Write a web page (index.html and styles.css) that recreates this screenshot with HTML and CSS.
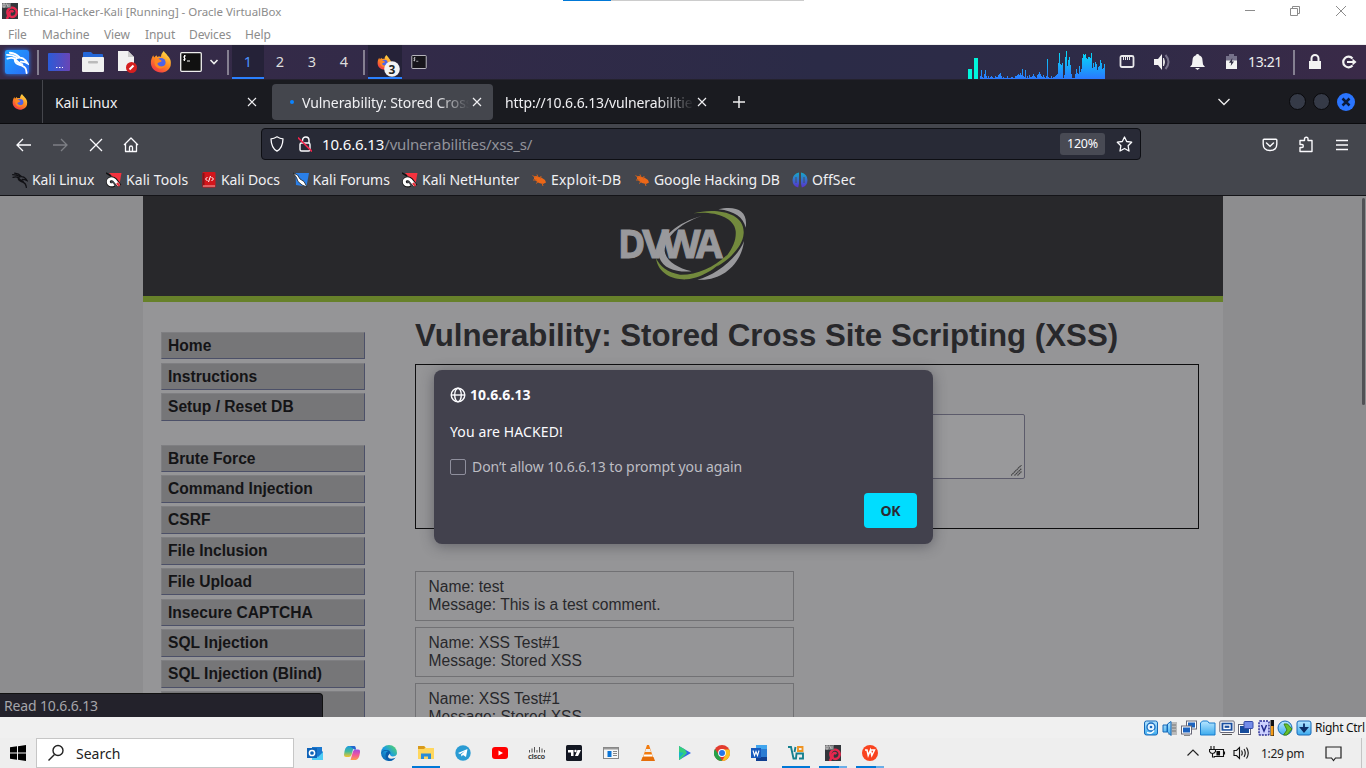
FILE: index.html
```html
<!DOCTYPE html>
<html lang="en">
<head>
<meta charset="utf-8">
<title>Ethical-Hacker-Kali [Running] - Oracle VirtualBox</title>
<link rel="stylesheet" href="styles.css">
</head>
<body>
<svg class="defs" width="0" height="0">
  <defs>
    <linearGradient id="gd" x1="0" y1="0" x2="1" y2="0"><stop offset="0" stop-color="#2b5bd8"/><stop offset="1" stop-color="#6a45b5"/></linearGradient>
    <linearGradient id="gf" x1="0.8" y1="0" x2="0.2" y2="1"><stop offset="0" stop-color="#ffe14a"/><stop offset=".5" stop-color="#ff8a20"/><stop offset="1" stop-color="#f0304a"/></linearGradient>
    <linearGradient id="gg" gradientUnits="userSpaceOnUse" x1="0" y1="0" x2="0" y2="30"><stop offset="0" stop-color="#00e8f5"/><stop offset="1" stop-color="#2a78ff"/></linearGradient>
    <linearGradient id="go" x1="0" y1="0" x2="0" y2="1"><stop offset="0" stop-color="#14a9c8"/><stop offset="1" stop-color="#5a2fd0"/></linearGradient>
    <linearGradient id="ge" x1="0" y1="1" x2="1" y2="0"><stop offset="0" stop-color="#0c59a4"/><stop offset=".5" stop-color="#1b9de0"/><stop offset="1" stop-color="#5ddc5a"/></linearGradient>
    <linearGradient id="gb" x1="0" y1="0" x2="0" y2="1"><stop offset="0" stop-color="#b8e6ff"/><stop offset="1" stop-color="#3cabee"/></linearGradient>
    <linearGradient id="gc1" x1="0" y1="0" x2="0" y2="1"><stop offset="0" stop-color="#1b9ae0"/><stop offset=".5" stop-color="#44bb99"/><stop offset="1" stop-color="#f7c52a"/></linearGradient>
    <linearGradient id="gc2" x1="0" y1="0" x2="0" y2="1"><stop offset="0" stop-color="#a14be0"/><stop offset=".5" stop-color="#f0559c"/><stop offset="1" stop-color="#ff9a4a"/></linearGradient>
    <symbol id="dragon" viewBox="0 0 24 24">
      <path d="M1 4c4 0 7 .5 10 2.500M1.500 8c3-1.200 6-1 8 .500M4 1.800c5 .5 8 2.500 10 4.700M9 8c0 6 4 6 8 7.500s4 4 4.500 7.500M10 9c2 3 5 4 7 5M11 7.500c4-1.500 7-.5 9.500 2.500l2 3-3-1.500-4-.500" fill="none" stroke="currentColor" stroke-width="1.900" stroke-linecap="round"/>
    </symbol>
    <symbol id="fox" viewBox="0 0 24 24">
      <path d="M15 0c1 2 3 3 4 5 3 3 4.500 6 3.500 11-1 4-5 7.500-10.500 7.500S1.500 19.500 1 14C.7 10 2 7 3.500 4.500L4.500 7 7 4.500l1 2c1-.5 3-.5 4 0C12 4 13 2 15 0z" fill="url(#gf)"/>
      <circle cx="12" cy="12.500" r="5" fill="#4d63e8"/>
      <path d="M5 9c2-1 4-1 6 .5l2 1.500c-1 1.500-4 1-5 3 1 3 6 4 9 1-2 6-11 5-12-1.500z" fill="#ff8722"/>
    </symbol>
    <symbol id="term" viewBox="0 0 22 20">
      <rect x=".7" y=".7" width="20.600" height="18.600" rx="1" fill="#111" stroke="#eee" stroke-width="1.300"/>
      <path d="M6 4c-2-.7-3 1-1.500 2s.8 2.500-1.500 1.700M4.500 3v6M7 9h3" fill="none" stroke="#fff"/>
    </symbol>
    <symbol id="tool" viewBox="0 0 16 16">
      <path d="M3 1h12.500L13.500 12z" fill="#f5323e"/><path d="M0 1l5 3" stroke="#111" stroke-width="1.500"/>
      <path d="M13.500 14L9 8C6.500 5.500 2.500 7 2.500 10c0 3 3.500 4 5.500 2.500" fill="none" stroke="#111" stroke-width="4.500"/>
      <path d="M13 13.500L8.500 8C6 5.500 2.300 7 2.300 9.800c0 2.800 3.200 3.800 5.400 2.400" fill="none" stroke="#fff" stroke-width="3"/>
      <path d="M11 11l2.500 3" stroke="#e6323e" stroke-width="2.500"/>
    </symbol>
    <symbol id="bug" viewBox="0 0 16 16">
      <path d="M3 4.500l2-.5 3 1 3 1 3 2 1 2.500-3 1.500-4-1-3-2-2-2.500z" fill="#ec6718"/>
      <path d="M1.500 3.500l3 2M6 2.500l1 3M10 4l-.5 3M2 8h4M5 11.500l2-1.500M12 14l-1-3" fill="none" stroke="#d0601c"/>
    </symbol>
    <symbol id="x" viewBox="0 0 12 12"><path d="M2 2l8 8M10 2l-8 8" fill="none" stroke="currentColor" stroke-width="1.200"/></symbol>
    <symbol id="spiral" viewBox="0 0 16 16">
      <rect width="16" height="16" fill="#33363b"/><path d="M4.500 16Q7 14 5.500 10.500A4.700 4.700 0 1 1 10 14C7.500 14 7 11 8 9q1.500-2 3.500 0" fill="none" stroke="#e5274e" stroke-width="2.400"/><path d="M0 0h9v5H0z" fill="#6f6f72"/><path d="M1 1h2v3H1zM4 1h1l1 3M7 1v3" stroke="#ddd" stroke-width=".7" fill="none"/>
    </symbol>
  </defs>
</svg>

<header class="titlebar">
  <svg class="app" width="16" height="16"><use href="#spiral"/></svg>
  <span class="title">Ethical-Hacker-Kali [Running] - Oracle VirtualBox</span>
  <i class="minibar"></i>
  <svg class="winctl" width="104" height="12" viewBox="0 0 104 12" fill="none" stroke="#8c8c8c"><path d="M0 5.500h10M45.500 3.500h7v7h-7zM47.500 3.500v-2h7v7h-2M91 1l10 10M101 1L91 11"/></svg>
</header>
<nav class="menubar"><span class="m1">File</span><span class="m2">Machine</span><span class="m3">View</span><span class="m4">Input</span><span class="m5">Devices</span><span>Help</span></nav>

<div class="panel">
  <span class="cell c34"><span class="kali"><svg width="23" height="23" color="#fff"><use href="#dragon"/></svg></span></span>
  <i class="sep"></i>
  <span class="cell c34"><svg width="22" height="18"><rect width="22" height="18" rx="1" fill="url(#gd)"/><path d="M8 14.500h1.500M11 14.500h1.500M14 14.500h1" stroke="#fff"/></svg></span>
  <span class="cell c34"><svg width="22" height="20"><path d="M1 1q0-1 1-1h7l2 2h9q1 0 1 1v6H1z" fill="#2467d8"/><rect y="5" width="22" height="15" rx="1" fill="#f0f0f0"/><rect x="6" y="9" width="10" height="2.500" rx="1" fill="#bbb"/></svg></span>
  <span class="cell c34"><svg width="20" height="22"><path d="M1 0h10l6 6v14H1z" fill="#f1f1f1"/><path d="M11 0l6 6h-6z" fill="#ccc"/><circle cx="14.500" cy="16.500" r="5.500" fill="#d51f1f"/><path d="M12.500 18.500l4-4" stroke="#fff" stroke-width="2"/></svg></span>
  <span class="cell c34"><svg width="22" height="22"><use href="#fox"/></svg></span>
  <span class="cell c26"><svg width="22" height="20"><use href="#term"/></svg></span>
  <span class="cell c20"><svg width="10" height="8" fill="none" stroke="#eee" stroke-width="1.600"><path d="M1.500 2L5 5.500 8.500 2"/></svg></span>
  <i class="sep"></i>
  <span class="ws on">1</span><span class="ws">2</span><span class="ws">3</span><span class="ws">4</span>
  <i class="sep"></i>
  <span class="cell c34 task"><svg width="24" height="24"><use href="#fox" x="1" y="2" width="15" height="15"/><circle cx="16" cy="16" r="7.800" fill="#f2f2f2"/><text x="16" y="20.500" class="count">3</text></svg></span>
  <span class="cell c34"><svg width="16" height="14" opacity=".8"><use href="#term"/></svg></span>
  <span class="tray">
    <svg width="140" height="30"><path d="M0 20h4v10H0zM6 9h4v21H6z" fill="#00f5dc"/><path fill="url(#gg)" d="M12 30V27h1V21h1V28h1V29h1V25h1V21h1V27h1V29h1V27h1V29h1V28h1V27h1V28h1V29h2V27h1V28h2V26h1V25h1V24h1V27h1V29h1V28h1V29h3V27h1V29h3V28h2V29h2V27h2V26h1V25h1V26h1V24h1V26h1V20h1V27h1V28h1V21h1V29h1V27h1V29h1V26h1V28h2V27h1V25h1V27h1V28h1V29h1V26h1V25h1V23h1V25h1V27h1V28h1V26h1V28h1V29h1V27h1V10h1V28h1V29h2V27h1V29h1V28h2V27h1V26h1V25h1V14h1V4h1V15h1V16h1V14h1V29h1V26h1V8h1V2h1V17h1V11h1V8h1V16h1V25h1V29h3V25h1V20h1V24h1V25h1V17h1V23h1V20h1V9h1V5h1V6h1V5h1V9h1V10h1V8h2V9h1V4h1V19h1V14h1V18h1V13h1V15h1V21h1V18h1V17h1V11h1V14h1V20h1V19h1V15h1V30z"/></svg>
    <span class="cell c37"><svg width="16" height="14" fill="none" stroke="#e8e8ea"><path d="M3 1h10q1.500 0 1.500 1.500v8q0 1.500-1.500 1.500H3q-1.500 0-1.500-1.500v-8Q1.500 1 3 1z" stroke-width="1.800"/><path d="M4.500 2v3M6.500 2v3M8.500 2v3M10.500 2v3"/></svg></span>
    <span class="cell c34"><svg width="18" height="18" fill="none"><path d="M1 6h4l4-5v16l-4-5H1z" fill="#f3f3f3"/><path d="M10.500 5q2 4 0 8z" fill="#ddd" stroke="#ddd"/><path d="M12.500 2q6 7 0 14" stroke="#77728a" stroke-width="2"/></svg></span>
    <span class="cell c36"><svg width="15" height="16" fill="#f3f3f3"><path d="M7.500 0q1.500 0 1.500 1.300 3.500 1 3.500 5.200l.5 4L15 13H0l2-2.500.5-4Q2.500 2.300 6 1.300 6 0 7.500 0zM5 14h5l-2.500 2z"/></svg></span>
    <span class="cell c32"><svg width="11" height="16"><path d="M0 2h3V0h5v2h3v5H0z" fill="#76728a"/><path d="M0 6.500h11V15H0z" fill="#f3f3f3"/><path d="M6.300 4L3 8.800h2.200L4.700 12 8 7.500H6z" fill="#302c42"/></svg></span>
    <span class="clock">13:21</span>
    <i class="sep s2"></i>
    <span class="cell c34"><svg width="14" height="16"><path d="M1 7h12v8H1z" fill="#f3f3f3"/><path d="M3.500 8V4.500a3.500 3.500 0 0 1 7 0V8" fill="none" stroke="#f3f3f3" stroke-width="2"/></svg></span>
    <span class="cell c34"><svg width="16" height="14" fill="none" stroke="#f3f3f3" stroke-width="2.200"><path d="M11.500 3.500a5.300 5.300 0 1 0 0 7M6 7h7"/><path d="M11.500 3.500L15.500 7l-4 3.500z" fill="#f3f3f3" stroke="none"/></svg></span>
  </span>
</div>

<div class="tabs">
  <span class="cell pin"><svg width="16" height="16"><use href="#fox"/></svg></span>
  <span class="tab t1"><span class="label">Kali Linux</span><svg width="12" height="12"><use href="#x"/></svg></span>
  <span class="tab t2"><i class="dot"></i><span class="label fade">Vulnerability: Stored Cross</span><svg width="12" height="12"><use href="#x"/></svg></span>
  <span class="tab t3"><span class="label fade">http://10.6.6.13/vulnerabilitie</span><svg width="12" height="12"><use href="#x"/></svg></span>
  <svg class="plus" width="12" height="12" stroke="#eee" stroke-width="1.500"><path d="M6 0v12M0 6h12"/></svg>
  <svg class="all" width="12" height="8" fill="none" stroke="#eee" stroke-width="1.300"><path d="M.5 1L6 6.500 11.500 1"/></svg>
  <span class="rounds"><i></i><i></i><i class="shut"><svg width="12" height="12" viewBox="0 0 12 12"><path d="M2.500 2.500l7 7M9.500 2.500l-7 7" stroke="#0a1a3a" stroke-width="2.500"/></svg></i></span>
</div>

<div class="navbar">
  <span class="cell c36"><svg width="16" height="14" fill="none" stroke="#fbfbfe" stroke-width="1.300"><path d="M15 7H1.500M7 1L1 7l6 6"/></svg></span>
  <span class="cell c36"><svg width="16" height="14" fill="none" stroke="#7d7f85" stroke-width="1.300"><path d="M1 7h13.500M9 1l6 6-6 6"/></svg></span>
  <span class="cell c36"><svg width="14" height="14" stroke="#fbfbfe" stroke-width="1.300"><path d="M1 1l12 12M13 1L1 13"/></svg></span>
  <span class="cell c36 home"><svg width="16" height="16" fill="none" stroke="#fbfbfe" stroke-width="1.300" stroke-linejoin="round"><path d="M1 8l7-7 7 7M2.500 7v7.500h11V7M6.500 14.500v-4q0-1.500 1.500-1.500t1.500 1.500v4"/></svg></span>
  <div class="url">
    <span class="cell c30"><svg width="16" height="16" fill="none" stroke="#fbfbfe" stroke-width="1.300"><path d="M8 .8q3 2 6 2-.3 9.500-6 12.400Q2.300 12.300 2 2.800q3 0 6-2z" stroke-linejoin="round"/></svg></span>
    <span class="cell c26"><svg width="14" height="16" fill="none" stroke="#fbfbfe" stroke-width="1.400"><rect x="2" y="7" width="10" height="8" rx="1.500"/><path d="M4.500 6V4Q5 .8 8 1t3 3v3"/><path d="M0 1.500l14 14" stroke="#f0254c" stroke-width="1.600"/></svg></span>
    <span class="addr"><b>10.6.6.13</b>/vulnerabilities/xss_s/</span>
    <span class="zoom">120%</span>
    <span class="cell c34s"><svg width="17" height="16" fill="none" stroke="#fbfbfe" stroke-width="1.300" stroke-linejoin="round"><path d="M8.500 1l2.200 4.500 5 .7-3.600 3.500.9 5.300-4.500-2.500L4 15l.9-5.300L1.300 6.200l5-.7z"/></svg></span>
  </div>
  <span class="navright">
    <span class="cell c36"><svg width="16" height="14" fill="none" stroke="#fbfbfe" stroke-width="1.400" stroke-linecap="round"><path d="M2 1.300h12q.8 0 .8.800V6q0 6.500-6.800 6.500T1.200 6V2.100q0-.8.8-.8zM4.500 5L8 8.300 11.500 5"/></svg></span>
    <span class="cell c36"><svg width="16" height="17" fill="none" stroke="#fbfbfe" stroke-width="1.400" stroke-linejoin="round"><path d="M2 4.500h4.500V3q0-1.800 1.800-1.800T10 3v1.500h4V15.500H2V11.500h2q1.300 0 1.300-1.500T4 8.500H2z"/></svg></span>
    <span class="cell c36"><svg width="12" height="12" stroke="#fbfbfe" stroke-width="1.300"><path d="M0 1.500h12M0 6h12M0 10.500h12"/></svg></span>
  </span>
</div>

<div class="bookmarks">
  <span class="b1"><svg width="16" height="16" color="#101014"><use href="#dragon"/></svg>Kali Linux</span>
  <span class="b2"><svg width="16" height="16"><use href="#tool"/></svg>Kali Tools</span>
  <span class="b3"><svg width="16" height="16"><rect x="1.500" y="0" width="13" height="15.500" rx="1" fill="#d3151b"/><path d="M1.500 1h2v13h-2z" fill="#8a1318"/><path d="M2 14h12" stroke="#eaa"/><path d="M6.500 5L4.500 7l2 2M10.500 5l2 2-2 2M9.500 4l-2 6" stroke="#fff" fill="none"/></svg>Kali Docs</span>
  <span class="b4"><svg width="16" height="16"><path d="M2.500 1H16l-2.500 13.500L3 13z" fill="#2a7fe8"/><path d="M0 1l4.500 2L7 7l4 2.500 3 5.500-5-2-4-3.500-1.500-4z" fill="#fff" stroke="#222" stroke-width=".8"/></svg>Kali Forums</span>
  <span class="b5"><svg width="16" height="16"><use href="#tool"/></svg>Kali NetHunter</span>
  <span class="b6"><svg width="16" height="16"><use href="#bug"/></svg>Exploit-DB</span>
  <span class="b7"><svg width="16" height="16"><use href="#bug"/></svg>Google Hacking DB</span>
  <span class="b8"><svg width="16" height="16" fill="url(#go)"><path d="M7 .5v11L6.200 15.500Q.5 14 .5 8T7 .5zM9 .5v11l.8 4Q15.500 14 15.500 8T9 .5z"/><path d="M4 5v6M12 5v6" stroke="#44464d" stroke-width=".8"/></svg>OffSec</span>
</div>

<main class="viewport">
  <div class="container">
    <div class="header">
      <svg width="190" height="100" viewBox="0 0 570 300">
        <path d="M335 60C260 80 198 130 208 185 220 218 260 230 305 226 260 215 228 195 224 165 225 125 265 85 335 60zM385 40C440 28 475 45 467 95 460 65 435 45 385 40zM462 135C455 200 400 257 322 251 375 238 440 190 462 135z" fill="#99999c"/>
        <path d="M310 52C370 35 465 45 461 112 459 150 420 190 380 212 420 175 440 140 437 105 432 62 370 45 310 52zM198 187C205 235 250 252 290 250 340 245 390 210 412 176 370 215 320 237 270 236 230 230 210 210 198 187z" fill="#738a3d"/>
        <g class="dvwa"><text x="84" y="185" textLength="82" lengthAdjust="spacingAndGlyphs">D</text><text x="157" y="185" textLength="80" lengthAdjust="spacingAndGlyphs">V</text><text x="216" y="185" textLength="116" lengthAdjust="spacingAndGlyphs">W</text><text x="318" y="185" textLength="80" lengthAdjust="spacingAndGlyphs">A</text></g>
      </svg>
    </div>
    <div class="columns">
      <div class="side">
        <ul><li>Home</li><li>Instructions</li><li>Setup / Reset DB</li></ul>
        <ul><li>Brute Force</li><li>Command Injection</li><li>CSRF</li><li>File Inclusion</li><li>File Upload</li><li>Insecure CAPTCHA</li><li>SQL Injection</li><li>SQL Injection (Blind)</li><li>&nbsp;</li></ul>
      </div>
      <div class="content">
        <h1>Vulnerability: Stored Cross Site Scripting (XSS)</h1>
        <div class="formbox"><div class="area"><svg width="11" height="11" stroke="#444446" stroke-width="1.200" stroke-dasharray="1.600 .4"><path d="M0 10.500L10.500 0M3.500 10.500l7-7M6.500 10.500l4-4"/></svg></div></div>
        <div class="comment">Name: test<br>Message: This is a test comment.</div>
        <div class="comment">Name: XSS Test#1<br>Message: Stored XSS</div>
        <div class="comment">Name: XSS Test#1<br>Message: Stored XSS</div>
      </div>
    </div>
  </div>
  <i class="scroll"></i>
  <div class="dialog">
    <div class="origin"><svg width="16" height="16" fill="none" stroke="#fbfbfe" stroke-width="1.400"><circle cx="8" cy="8" r="6.800"/><ellipse cx="8" cy="8" rx="3.300" ry="6.800"/><path d="M1 8h14"/></svg><span>10.6.6.13</span></div>
    <div class="msg">You are HACKED!</div>
    <div class="check"><i></i><span>Don’t allow 10.6.6.13 to prompt you again</span></div>
    <div class="buttons"><span class="ok">OK</span></div>
  </div>
  <div class="status"><span>Read 10.6.6.13</span></div>
</main>

<div class="vmstatus">
  <span class="vmicons">
    <svg width="16" height="16"><rect x="1.500" y="1" width="13" height="14" rx="2" fill="url(#gb)" stroke="#1668b8"/><circle cx="8" cy="7" r="4" fill="#e8f6ff" stroke="#186abf" stroke-width="1.300"/><circle cx="8" cy="7" r="1.300" fill="#186abf"/><path d="M4 12.500q5 2 7-2" stroke="#fff" stroke-width="1.500" fill="none"/></svg>
    <svg width="16" height="16"><path d="M8 2h7v13H6z" fill="#bbb"/><path d="M1 5h4v7H1zM5.500 4L9 1.500v14L5.500 12z" fill="url(#gb)" stroke="#1668b8"/><path d="M10 5h4M10 8h4M10 11h4" stroke="#777"/></svg>
    <svg width="16" height="16"><rect x="5.500" y="1" width="10" height="8" fill="#fff" stroke="#667"/><rect x="7" y="2.500" width="7" height="5" fill="#1b62bf"/><rect x=".5" y="6" width="10" height="8" fill="#fff" stroke="#667"/><rect x="2" y="7.500" width="7" height="5" fill="#1b62bf"/><path d="M3 15.500h6" stroke="#888"/></svg>
    <svg width="16" height="16"><path d="M.5 15V3l2-2h5l1.500 2h6v12z" fill="url(#gb)" stroke="#1b7ccc"/></svg>
    <svg width="16" height="16"><rect x=".8" y="1" width="14.400" height="11.500" rx="1" fill="#fff" stroke="#667"/><rect x="2.500" y="2.700" width="11" height="8" fill="#1b4f9f"/><rect x="5" y="5" width="6" height="3.500" fill="#1b4f9f" stroke="#fff" stroke-width="1.300"/><path d="M3 14.500h10" stroke="#555"/></svg>
    <svg width="16" height="16"><rect x=".5" y="4.500" width="12" height="10" fill="#fff" stroke="#667"/><rect x="2" y="6" width="9" height="7" fill="#164c9c"/><rect x="6" y="1.500" width="9" height="7" rx="1" fill="#738ce8" stroke="#344aa8"/></svg>
    <svg width="16" height="16"><rect x="1" y="1" width="10" height="14" rx="1" fill="#cdd2ff" stroke="#2d3196" stroke-width="1.500" stroke-dasharray="2 1"/><path d="M3.500 5L6 11l2.500-6" fill="none" stroke="#222a8c" stroke-width="1.500"/><path d="M12.500 0H16v16h-3.500z" fill="#111"/><path d="M13 6h2.500v9.500H13z" fill="#f59b16"/></svg>
    <svg width="16" height="16"><circle cx="8" cy="8" r="7" fill="url(#gb)" stroke="#1668b8"/><path d="M7 4h3.500l4.500 5-5 6H6.500l3.500-5z" fill="#67c12d" stroke="#3c8519"/></svg>
    <svg width="16" height="16"><rect x="1" y="1" width="14" height="14" rx="2" fill="url(#gb)" stroke="#1668b8"/><path d="M8 3.500v5M5 8l3 3.500L11 8z" fill="#0d2e66" stroke="#0d2e66" stroke-width="1.800"/></svg>
  </span>
  <span class="host">Right Ctrl</span>
</div>

<footer class="taskbar">
  <span class="cell c36"><svg width="16" height="16"><path d="M0 2.300L7 1.300V7.500H0zM8 1.200L16 0v7.500H8zM0 8.500h7v6.200l-7-1zM8 8.500h8V16l-8-1.200z"/></svg></span>
  <span class="search"><svg width="18" height="18" fill="none" stroke="#222" stroke-width="1.400"><circle cx="11" cy="6.500" r="5"/><path d="M7.500 10.500L1.500 16.500"/></svg>Search</span>
  <span class="apps">
    <span class="a"><svg width="16" height="16"><path d="M5 2h10v4l1 1v8H5z" fill="#1a78cf"/><path d="M5 8l6 4 5-5v8H5z" fill="#4fcdf5"/><path d="M0 3h10v10H0z" fill="#0f63b8"/><circle cx="5" cy="8" r="2.600" fill="none" stroke="#fff" stroke-width="1.500"/></svg></span>
    <span class="a"><svg width="16" height="16"><path d="M4 1h6L7.500 10q-.8 2-2.500 2H2q-2 0-2-2 .5-8 4-9z" fill="url(#gc1)"/><path d="M12 15H6.500L9 6.500q.7-2 2.500-2H14q2.500 0 2 3-1 7-4 7.500z" fill="url(#gc2)"/><path d="M6 1h4.500q1.300 0 1.500 3.500h-2z" fill="#2367d0"/></svg></span>
    <span class="a"><svg width="16" height="16"><circle cx="8" cy="8" r="8" fill="url(#ge)"/><path d="M.5 9Q1 4.500 5.500 5q4 0 4 3.500Q7 10 10 12q3 1 5-1-2 5-7 5 -4-1-3.500-6Q4.500 7 7 6 2 5 .5 9z" fill="#0b5cab"/><path d="M9 8.500q-.5 2.500 3 3 2.500 0 4-2V12l-2 1q-7 2-7-2z" fill="#eee"/></svg></span>
    <span class="a run"><svg width="16" height="16"><path d="M0 1h6l2 2h8v11H0z" fill="#ffd75e"/><path d="M0 1h6l1.500 1.500L6 4H0z" fill="#d89a1b"/><path d="M3 14V8.500h10V14h-3v-2.500H6V14z" fill="#2a8cd8"/></svg></span>
    <span class="a"><svg width="16" height="16"><circle cx="8" cy="8" r="7.700" fill="#2a9bd3"/><path d="M3 8l9.500-4L11 12l-3-2-1.500 1.500L6 9.500 10 6 5 9z" fill="#fff"/></svg></span>
    <span class="a"><svg width="16" height="12"><rect width="16" height="12" rx="3" fill="#f00"/><path d="M6.500 3.500v5L11 6z" fill="#fff"/></svg></span>
    <span class="a"><span class="cisco"><svg width="16" height="6" stroke="#555"><path d="M.5 3v2.500M3 1.500v4M5.500 0v5.500M8 3v2.500M10.500 0v5.500M13 1.500v4M15.500 3v2.500"/></svg>cisco</span></span>
    <span class="a"><svg width="16" height="16"><rect width="16" height="16" rx="1.500" fill="#131722"/><path d="M2 5h5.500v6H5V7.500H2zM11.500 5H15l-3 6H9z" fill="#fff"/><circle cx="9.500" cy="6" r="1.200" fill="#fff"/></svg></span>
    <span class="a"><svg width="16" height="12"><rect x=".5" y=".5" width="15" height="11" fill="#f7f7f7" stroke="#888"/><path d="M1 1h14v1.500H1z" fill="#999"/><path d="M4.500 4h4v6h-4z" fill="#0a74d6"/><path d="M10 4.500h4M10 6.500h4M10 8.500h4" stroke="#888"/></svg></span>
    <span class="a"><svg width="14" height="16"><path d="M6 0h2l4 12H2z" fill="#f27c10"/><path d="M5 4h4l1 3H4z" fill="#eee"/><path d="M3 9.500h8l.5 2h-9z" fill="#fff"/><path d="M1.500 12h11l1.500 4H0z" fill="#e56e0a"/></svg></span>
    <span class="a"><svg width="14" height="14"><path d="M1 0l12 7-12 7z" fill="#3268e8"/><path d="M1 0l6 3.500L9 7 3 13l-2 1z" fill="#35cf7c"/><path d="M1 6l5 1-5 5z" fill="#17b2c8"/></svg></span>
    <span class="a"><svg width="16" height="16"><circle cx="8" cy="8" r="8" fill="#e33b2e"/><path d="M1 4l4 6 3 6A8 8 0 0 1 1 4z" fill="#26a147"/><path d="M8 4.500h7.200A8 8 0 0 1 8 16l3.500-6z" fill="#fcc31e"/><circle cx="8" cy="8" r="3.900" fill="#fff"/><circle cx="8" cy="8" r="3" fill="#2877e8"/></svg></span>
    <span class="a"><svg width="16" height="16"><path d="M5 0h11v16H5z" fill="#2b7cd3"/><path d="M5 0h11v4H5z" fill="#41a5ee"/><path d="M5 12h11v4H5z" fill="#103f91"/><path d="M0 3h10v10H0z" fill="#185abd"/><path d="M2 5.500L3.500 10.500 5 6.500 6.500 10.500 8 5.500" fill="none" stroke="#fff" stroke-width="1.100"/></svg></span>
    <span class="a run"><svg width="16" height="16" fill="none" stroke-width="1.900"><path d="M0 2h3L5.500 13.500H8L8.500 8.500H15v5h-4" stroke="#16808e"/><path d="M7.500 2L6.500 7" stroke="#16808e"/><path d="M10 2h4.500v4H10z" stroke="#ef9423"/></svg></span>
    <span class="a run two"><svg width="16" height="16"><use href="#spiral"/></svg></span>
    <span class="a run two"><svg width="16" height="16"><circle cx="8" cy="8" r="8" fill="#f9431f"/><path d="M3 5h2l1.200 5.500L8.500 5l1.300 5.500L12.500 5H8" fill="none" stroke="#fff" stroke-width="1.500"/></svg></span>
  </span>
  <span class="systray">
    <span class="cell c24"><svg width="12" height="8" fill="none" stroke="#222" stroke-width="1.200"><path d="M.5 6.500L6 1l5.500 5.500"/></svg></span>
    <span class="cell c24"><svg width="17" height="14" fill="none" stroke="#111" stroke-width="1.100"><path d="M7 3.500h7.500v7H5M15.500 5.500v3M2 0v3M5 0v3M.5 3.500h6v2q-1 2-3 2t-3-2zM3.500 8v3H6"/><path d="M8 5.500h2.500v3.500H8z" fill="#111"/></svg></span>
    <span class="cell c24"><svg width="17" height="14" fill="none" stroke="#111" stroke-width="1.100"><path d="M1 4.500h2.500l3-3v11l-3-3H1zM8.500 4.500q1.500 2.500 0 5M11 3q2.500 4 0 8M13.500 1.500q3.500 5.500 0 11"/></svg></span>
    <span class="time">1:29 pm</span>
    <svg class="note" width="17" height="16" fill="none" stroke="#222" stroke-width="1.200"><path d="M1 1h15v11h-5.500L8.500 14.500 6.500 12H1z"/></svg>
    <i class="edge"></i>
  </span>
</footer>
</body>
</html>
```
FILE: styles.css
```css
* { box-sizing: border-box; }
body { margin: 0; width: 1366px; height: 768px; overflow: hidden; display: flex; flex-direction: column; background: #fff; font-family: "Noto Sans", sans-serif; font-size: 14px; }
body > * { flex: none; }
.defs { position: absolute; }
svg { display: block; flex: none; }
i { display: block; flex: none; }
span { white-space: nowrap; }
.cell { display: flex; align-items: center; justify-content: center; flex: none; }
.c20 { width: 20px; } .c24 { width: 24px; } .c26 { width: 26px; } .c30 { width: 30px; } .c32 { width: 32px; }
.c34 { width: 34px; } .c36 { width: 36px; } .c37 { width: 37px; }

.titlebar { height: 24px; display: flex; align-items: flex-start; color: #8c8c8c; font-size: 11.5px; }
.app { margin: 3px 5px 0 2px; }
.title { width: 540px; line-height: 23px; letter-spacing: -0.03px; }
.minibar { width: 241px; height: 1px; background: linear-gradient(90deg, #0078d7 48px, #ccc 48px); }
.winctl { margin: 5px 0 0 441px; }
.menubar { height: 21px; padding-left: 8px; display: flex; line-height: 21px; font-size: 12px; letter-spacing: -0.1px; color: #8c8c8c; border-bottom: 1px solid #f0f0f0; }
.m1 { width: 34px; } .m2 { width: 62px; } .m3 { width: 41px; } .m4 { width: 44px; } .m5 { width: 56px; }

.panel { height: 35px; display: flex; align-items: stretch; background: linear-gradient(90deg, #382b48, #322a48 30%, #2b2b47 60%, #2d2b47 78%, #3a2a48); border-bottom: 1px solid #24222e; }
.kali { width: 24px; height: 24px; background: linear-gradient(135deg, #1fa2ff, #2a6bf5); border-radius: 2px; box-shadow: 0 0 4px #2a7fff; display: flex; align-items: center; justify-content: center; }
.sep { width: 2px; height: 25px; margin: 5px 3px 0; background: #858091; }
.ws { width: 32px; text-align: center; line-height: 33px; font-size: 14.5px; color: #ddd; }
.ws.on { background: #252238; color: #4c93ff; border-bottom: 2px solid #2a7fff; }
.task { background: #252238; border-bottom: 2px solid #2a7fff; padding-left: 6px; padding-top: 7px; }
.count { font-size: 12px; font-weight: 700; text-anchor: middle; fill: #222; }
.tray { margin-left: auto; display: flex; }
.tray > svg { margin-top: 4px; }
.clock { width: 36px; text-align: center; line-height: 34px; color: #eee; font-size: 14px; letter-spacing: -0.4px; }
.s2 { margin-left: 10px; }

.tabs { height: 44px; display: flex; align-items: center; background: #1a1b20; border-bottom: 1px solid #0b0b0e; color: #f0f0f3; }
.pin { width: 43px; height: 43px; border-right: 1px solid #45464c; padding-right: 2px; }
.tab { height: 36px; display: flex; align-items: center; letter-spacing: -0.08px; }
.t1 { width: 229px; padding-left: 12px; }
.t1 .label { width: 191px; }
.t2 { width: 221px; background: #44464d; border-radius: 4px; padding-left: 18px; }
.dot { width: 4px; height: 4px; border-radius: 2px; background: #0a84ff; margin-right: 8px; }
.label { overflow: hidden; padding-top: 2px; }
.t2 .label { width: 169px; }
.t3 { width: 240px; padding-left: 12px; }
.t3 .label { width: 191px; letter-spacing: -0.12px; }
.fade { -webkit-mask-image: linear-gradient(90deg, #000 80%, transparent 99%); mask-image: linear-gradient(90deg, #000 80%, transparent 99%); }
.all { margin-left: 473px; }
.rounds { display: flex; gap: 7px; margin-left: 59px; }
.rounds i { width: 17px; height: 17px; border-radius: 50%; background: #353a47; border: 1px solid #08080b; }
.rounds .shut { background: #2a75ff; border: 0; width: 18px; height: 18px; display: flex; align-items: center; justify-content: center; }

.navbar { height: 41px; display: flex; padding-left: 6px; background: #44464d; }
.home { padding-right: 2px; }
.url { width: 880px; height: 32px; margin: 4px 0 0 111px; background: #282a36; border: 1px solid #0e0f14; border-radius: 4px; display: flex; align-items: center; }
.addr { flex: 1; padding-left: 4px; font-size: 15px; letter-spacing: -0.15px; color: #92939b; }
.addr b { font-weight: 400; color: #fbfbfe; }
.zoom { width: 45px; height: 22px; line-height: 22px; text-align: center; background: #484a54; border-radius: 3px; font-size: 12.500px; letter-spacing: -0.2px; color: #fbfbfe; }
.c34s { width: 35px; padding-left: 3px; }
.navright { display: flex; margin-left: auto; padding-right: 6px; }

.bookmarks { height: 31px; padding: 0 0 1px 12px; display: flex; align-items: center; background: #44464d; border-bottom: 1px solid #141418; color: #f0f0f3; letter-spacing: -0.08px; }
.bookmarks span { display: flex; align-items: center; gap: 4px; }
.b1 { width: 94px; } .b2 { width: 95px; letter-spacing: 0.08px; } .b3 { width: 91.500px; } .b4 { width: 109.500px; letter-spacing: 0; } .b5 { width: 129px; letter-spacing: 0; } .b6 { width: 103px; letter-spacing: 0.2px; } .b7 { width: 158px; }
.b8 { letter-spacing: 0.1px; }

.viewport { position: relative; height: 521px; overflow: hidden; background: #8d8d8f; font-family: "Liberation Sans", Arial, sans-serif; }
.container { width: 1080px; height: 600px; margin-left: 143px; background: #959597; }
.header { height: 106px; background: #28282b; border-bottom: 6px solid #67812a; padding-left: 447px; }
.dvwa { font: 700 117px "Open Sans", sans-serif; fill: #99999c; stroke: #99999c; stroke-width: 3px; }
.columns { display: flex; padding-left: 18px; }
.side { width: 204px; padding-top: 29.700px; font-size: 15.600px; font-weight: 700; color: #141416; }
.side ul { list-style: none; margin: 0 0 23.600px; padding: 0; }
.side li { height: 27.600px; margin-bottom: 3.220px; padding-left: 6px; line-height: 26px; background: #767678; border: 1px solid #7f7f82; border-right-color: #4c5068; border-bottom-color: #4c5068; }
.content { margin-left: 50px; color: #28282b; font-size: 15.600px; }
h1 { margin: 0; padding: 15px 0 9px; font-size: 31.220px; line-height: 38px; white-space: nowrap; }
.formbox { width: 784px; height: 165px; border: 1px solid #0d0d0e; margin-bottom: 42px; padding: 49px 0 0 280px; }
.area { width: 329px; height: 65px; background: #99999b; border: 1px solid #5c5b6b; border-radius: 2px; display: flex; justify-content: flex-end; align-items: flex-end; padding: 2px; }
.comment { width: 379px; height: 50px; border: 1px solid #717174; margin-bottom: 6px; padding: 6px 0 0 12.500px; line-height: 18px; }
.scroll { position: absolute; right: 1px; top: 2px; width: 3px; height: 207px; border-radius: 2px; background: #515155; }
.dialog { position: absolute; left: 434px; top: 174px; width: 499px; height: 174px; border-radius: 8px; background: #42414d; box-shadow: 0 2px 14px rgba(40,40,50,.45); padding: 16px; font-family: "Noto Sans", sans-serif; font-size: 14px; color: #fbfbfe; }
.origin { display: flex; align-items: center; gap: 4px; height: 17px; font-weight: 700; letter-spacing: 0.08px; }
.msg { margin-top: 18px; line-height: 22px; letter-spacing: 0.12px; }
.check { display: flex; align-items: center; gap: 6px; margin-top: 12px; height: 22px; color: #bdbdc3; letter-spacing: -0.09px; }
.check i { width: 16px; height: 16px; margin-top: 1px; border: 1px solid #8f8f9d; border-radius: 2px; }
.buttons { display: flex; justify-content: flex-end; margin-top: 16px; }
.ok { width: 53px; height: 35px; line-height: 35px; text-align: center; border-radius: 4px; background: #00ddff; color: #2b2a33; font-weight: 700; letter-spacing: -0.2px; }
.status { position: absolute; left: 0; bottom: 0; width: 323px; height: 24px; background: #23222b; border-top: 1px solid #111; border-right: 1px solid #111; border-radius: 0 4px 0 0; padding-left: 4px; line-height: 23px; font-family: "Noto Sans", sans-serif; letter-spacing: -0.15px; color: #a5a5aa; }

.vmstatus { height: 21px; background: #f0f0f0; display: flex; justify-content: flex-end; align-items: center; padding-right: 1px; }
.vmicons { display: flex; gap: 3.200px; margin-right: 3px; }
.host { width: 50px; font-size: 12px; letter-spacing: -0.3px; line-height: 20px; padding-top: 1px; color: #111; }

.taskbar { height: 30px; display: flex; background: #eee; color: #222; }
.search { width: 258px; height: 30px; border: 1px solid #c6c6c6; background: #fff; display: flex; align-items: center; gap: 11px; padding: 0 0 0 10px; font-size: 14px; }
.apps { display: flex; margin-left: 2px; }
.a { width: 37px; display: flex; justify-content: center; align-items: center; position: relative; }
.run::after { content: ""; position: absolute; left: 5px; right: 4px; bottom: 0; height: 2px; background: #0078d7; }
.two::after { background: linear-gradient(90deg, #0078d7 20px, #69aee8 20px); }
.cisco { font: 700 7.500px/7px "Open Sans", sans-serif; color: #444; display: flex; flex-direction: column; align-items: center; letter-spacing: -0.3px; }
.systray { margin-left: auto; display: flex; align-items: center; }
.time { width: 44px; margin-left: 8px; font-size: 12px; letter-spacing: -0.35px; }
.note { margin: 1px 19px 0 20px; }
.edge { width: 1px; height: 30px; background: #c4c4c4; margin-right: 4px; }
```
